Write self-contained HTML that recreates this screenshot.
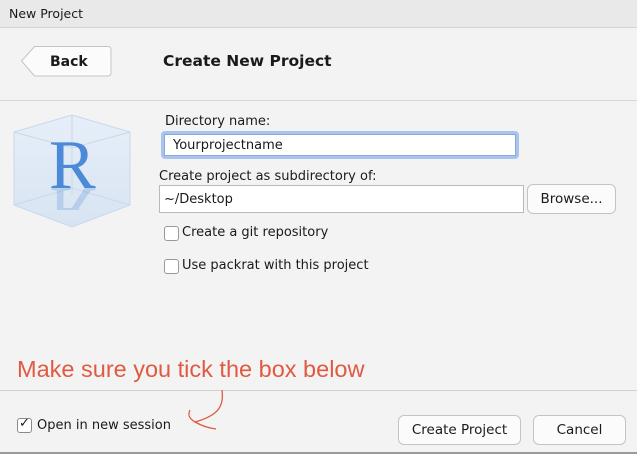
<!DOCTYPE html>
<html><head><style>
body{margin:0;width:637px;height:454px;background:#f3f3f3;font-family:"DejaVu Sans","Liberation Sans",sans-serif;font-size:13px;color:#1a1a1a;position:relative;overflow:hidden}
.a{position:absolute}
.btn{position:absolute;background:#fbfbfb;border:1px solid #c4c4c4;border-radius:6px;box-sizing:border-box;text-align:center;font-size:13.5px}
.inp{position:absolute;background:#fff;border:1px solid #b9b9b9;box-sizing:border-box;padding-left:8px}
.cb{position:absolute;width:15px;height:15px;border:1px solid #9a9a9a;border-radius:3px;background:#fff;box-sizing:border-box}
</style></head><body>
<div class="a" style="left:0;top:0;width:637px;height:27px;background:#e9e9e9;border-bottom:1px solid #d4d4d4"></div>
<div class="a" style="left:9px;top:6px;font-size:12.5px">New Project</div>
<svg class="a" style="left:20px;top:45px" width="94" height="34"><path d="M14.5 1.5 H88 a3 3 0 0 1 3 3 V28 a3 3 0 0 1 -3 3 H14.5 L1.5 16 Z" fill="#fbfbfb" stroke="#c4c4c4"/></svg>
<div class="a" style="left:50px;top:54px;font-weight:bold;font-size:14px">Back</div>
<div class="a" style="left:163px;top:52px;font-weight:bold;font-size:15.5px">Create New Project</div>
<div class="a" style="left:0;top:100px;width:637px;height:1px;background:#d6d6d6"></div>
<svg class="a" style="left:0;top:100px" width="150" height="160">
<defs><linearGradient id="g" x1="0" y1="0" x2="0" y2="1"><stop offset="0" stop-color="#e6eef8"/><stop offset="1" stop-color="#d8e4f2"/></linearGradient>
<clipPath id="c"><rect x="0" y="88" width="150" height="22"/></clipPath></defs>
<path d="M14 32 L72 15 L130 32 V105 L72 127 L14 105 Z" fill="url(#g)" stroke="#c8d8ea"/>
<path d="M14 32 L72 48 L130 32 M72 15 V95 M14 105 L72 88 L130 105" fill="none" stroke="#c8d8ea"/>
<text x="49" y="88" font-family="Liberation Serif,serif" font-size="70" fill="#4c8ad8">R</text>
<g clip-path="url(#c)"><text x="49" y="88" font-family="Liberation Serif,serif" font-size="70" fill="#4c8ad8" opacity="0.25" transform="translate(0,176) scale(1,-1)">R</text></g>
</svg>
<div class="a" style="left:165px;top:114px">Directory name:</div>
<div class="a" style="left:161px;top:131px;width:358px;height:28px;border-radius:4px;background:#a9c4ef"></div>
<div class="inp" style="left:164px;top:134px;width:352px;height:22px;line-height:21px;border-color:#8aa9d8">Yourprojectname</div>
<div class="a" style="left:159px;top:169px">Create project as subdirectory of:</div>
<div class="inp" style="left:159px;top:185px;width:365px;height:28px;line-height:28px;padding-left:4px">~/Desktop</div>
<div class="btn" style="left:527px;top:184px;width:89px;height:30px;line-height:29px">Browse...</div>
<div class="cb" style="left:164px;top:226px"></div>
<div class="a" style="left:182px;top:225px">Create a git repository</div>
<div class="cb" style="left:164px;top:259px"></div>
<div class="a" style="left:182px;top:258px">Use packrat with this project</div>
<div class="a" style="left:17px;top:356px;font-family:'Liberation Sans',sans-serif;font-size:23.5px;color:#e05a42">Make sure you tick the box below</div>
<div class="a" style="left:0;top:390px;width:637px;height:1px;background:#d0d0d0"></div>
<svg class="a" style="left:140px;top:390px" width="100" height="50"><path d="M82 0 C84 15 80 25 55 32 C48 28 48 24 50 20 M55 32 C62 36 68 38 76 39" fill="none" stroke="#e05a42" stroke-width="1.3"/></svg>
<div class="cb" style="left:17px;top:418px;border-color:#8a8a8a"></div>
<div class="a" style="left:19px;top:416px;font-size:13px">✓</div>
<div class="a" style="left:37px;top:418px">Open in new session</div>
<div class="btn" style="left:398px;top:415px;width:123px;height:30px;line-height:29px">Create Project</div>
<div class="btn" style="left:533px;top:415px;width:93px;height:30px;line-height:29px">Cancel</div>
<div class="a" style="left:0;top:452px;width:637px;height:2px;background:#9a9a9a"></div>
</body></html>
